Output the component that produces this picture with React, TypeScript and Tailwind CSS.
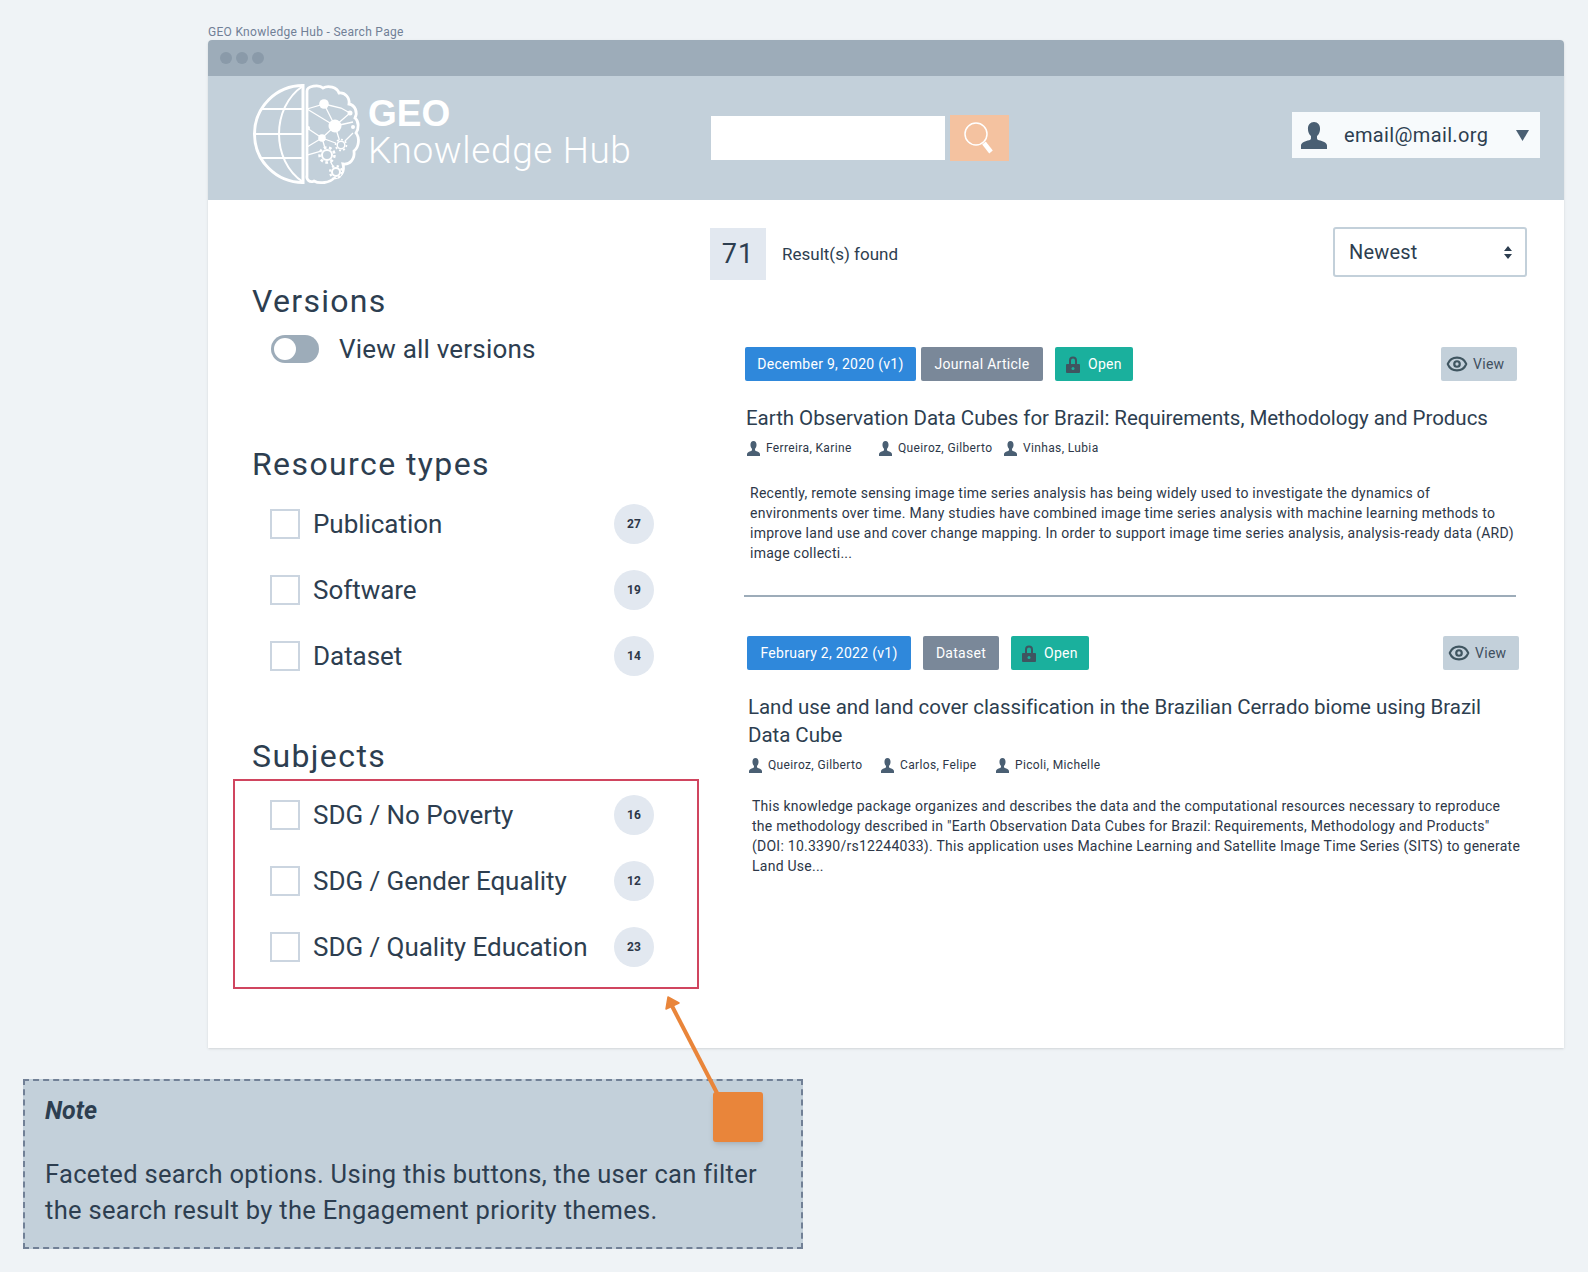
import { Eye } from "lucide-react";

const resourceTypes = [
  { name: "Publication", count: 27 },
  { name: "Software", count: 19 },
  { name: "Dataset", count: 14 },
];

const subjects = [
  { name: "SDG / No Poverty", count: 16 },
  { name: "SDG / Gender Equality", count: 12 },
  { name: "SDG / Quality Education", count: 23 },
];

function UserIcon({ className }: { className: string }) {
  return (
    <svg className={className} viewBox="0 0 24 26" fill="currentColor" preserveAspectRatio="none">
      <path d="M12 0c3.600 0 5.600 2.800 5.600 6.600 0 3-1.100 5.600-2.800 7v2.200c0 .9 1 1.500 3 2.100 3.600 1.100 6.200 2.500 6.200 5V26H0v-3.100c0-2.500 2.600-3.900 6.200-5 2-.6 3-1.200 3-2.100v-2.200c-1.700-1.400-2.800-4-2.800-7C6.400 2.800 8.400 0 12 0z" />
    </svg>
  );
}

function LockIcon() {
  return (
    <svg className="w-[14px] h-[17px] text-[#3f5560]" viewBox="0 0 14 17" fill="currentColor">
      <path d="M3 8V4.500a4 4 0 0 1 8 0V8H9V4.500a2 2 0 0 0-4 0V8z" />
      <rect x="0" y="8" width="14" height="9" rx="1" />
      <circle cx="7" cy="12.500" r="1.500" fill="#1ab09d" />
    </svg>
  );
}

function Logo() {
  return (
    <svg className="w-[130px] h-[120px] shrink-0" viewBox="0 1 130 120" fill="none" stroke="#fff" strokeWidth="2">
      <path d="M58 10.500A48.500 48.500 0 0 0 58 107.500" strokeWidth="3" />
      <path d="M58 9V109" strokeWidth="3" />
      <path d="M58 11C26 32 26 86 58 107" />
      <path d="M17 34H58M9 59H58M17 83H58" />
      <path
        d="M62 16C62 11 74 9 78 13C83 10 92 12 94 18C100 17 105 23 104 29C110 30 113 37 110 43C114 46 114 54 111 58C115 63 114 72 109 76C110 84 105 90 98 89C100 96 96 103 89 103C85 108 74 109 69 106C65 108 61 105 62 100Z"
        strokeWidth="2.800"
      />
      <path d="M62 34L79 29L90 51L105 38M79 29L96 33L105 38M90 51L77 63L62 53M90 51L108 47M90 51L96 70L108 58M77 63L62 72M77 63L82 80L91 97M62 80L76 76M62 34L90 51M77 63L96 70" strokeWidth="1.300" />
      <g fill="#fff" stroke="none">
        <circle cx="79" cy="29" r="4.800" />
        <circle cx="90" cy="51" r="6.500" />
        <circle cx="77" cy="63" r="3.800" />
        <circle cx="105" cy="38" r="2.500" />
        <circle cx="108" cy="52" r="2" />
        <circle cx="63" cy="53" r="2" />
      </g>
      <g fill="#c3d0da">
        <circle cx="82" cy="80" r="7.500" strokeWidth="2.500" strokeDasharray="2.800 2.500" />
        <circle cx="82" cy="80" r="5" strokeWidth="2" />
        <circle cx="96" cy="70" r="5.500" strokeWidth="1.600" strokeDasharray="2 2.200" />
        <circle cx="96" cy="70" r="3.800" strokeWidth="1.500" />
        <circle cx="91" cy="97" r="6" strokeWidth="2.200" strokeDasharray="2.300 2.400" />
        <circle cx="91" cy="97" r="4" strokeWidth="2" />
      </g>
    </svg>
  );
}

function FacetRow({ name, count }: { name: string; count: number }) {
  return (
    <div className="flex items-center h-[66px] w-[384px]">
      <div className="w-[30px] h-[30px] border-2 border-[#cbd5e0] bg-white" />
      <span className="ml-[13px] text-[26px] leading-8 tracking-[-0.04px] text-[#2d3e50]">{name}</span>
      <span className="ml-auto w-10 h-10 rounded-full bg-[#e2e8f0] flex items-center justify-center text-[12px] font-bold text-[#2d3748]">
        {count}
      </span>
    </div>
  );
}

function Author({ name, className }: { name: string; className: string }) {
  return (
    <div className={`flex items-center ${className}`}>
      <UserIcon className="w-[13px] h-[15px] text-[#4a5f73]" />
      <span className="ml-[6px] text-[12px] leading-4 tracking-[0.36px] text-[#2d3748]">{name}</span>
    </div>
  );
}

function ResultMeta({
  date,
  dateWidth,
  kind,
  kindWidth,
  greenGap,
}: {
  date: string;
  dateWidth: string;
  kind: string;
  kindWidth: string;
  greenGap: string;
}) {
  return (
    <div className="flex items-center h-[34px] text-[14px] tracking-[0.28px] text-white">
      <span className={`${dateWidth} h-full rounded-[2px] bg-[#2f88db] flex items-center justify-center`}>{date}</span>
      <span className={`${kindWidth} ml-[5px] h-full rounded-[2px] bg-[#7a8899] flex items-center justify-center`}>{kind}</span>
      <span className={`${greenGap} w-[78px] h-full rounded-[2px] bg-[#1ab09d] flex items-center pl-[11px] gap-[8px]`}>
        <LockIcon />
        Open
      </span>
      <span className="ml-auto w-[76px] h-full rounded-[2px] bg-[#c3d0da] flex items-center pl-[5px] gap-[5px] text-[#3f4f5f]">
        <Eye className="w-[22px] h-[22px] text-[#3f5560]" strokeWidth={2.400} />
        View
      </span>
    </div>
  );
}

export default function App() {
  return (
    <div
      className="relative h-[1272px] w-[1588px] overflow-hidden bg-[#eff3f6] pt-6 text-[#2d3748]"
      style={{ fontFamily: "Roboto, 'Liberation Sans', sans-serif" }}
    >
      <div className="ml-[208px] w-[1356px]">
        <div className="h-4 pt-[1px] text-[12px] leading-[14px] text-[#718096] tracking-[0.3px]">GEO Knowledge Hub - Search Page</div>

        {/* Browser window */}
        <div className="shadow-sm rounded-t-[4px] overflow-hidden bg-white h-[1008px]">
          <div className="h-9 bg-[#9dacb9] flex items-center pl-3 gap-1">
            <span className="w-3 h-3 rounded-full bg-[#8a9aa9]" />
            <span className="w-3 h-3 rounded-full bg-[#8a9aa9]" />
            <span className="w-3 h-3 rounded-full bg-[#8a9aa9]" />
          </div>

          <div className="h-[124px] bg-[#c3d0da] flex items-start pl-[37px]">
            <Logo />
            <div className="ml-[-7px] w-[343px] pt-[19px] text-white">
              <div className="text-[37px] leading-[38px] font-bold" style={{ fontFamily: "'Liberation Sans', sans-serif" }}>GEO</div>
              <div className="text-[37px] leading-[36px] font-light tracking-[0.6px] whitespace-nowrap">Knowledge Hub</div>
            </div>
            <div className="mt-[40px] w-[234px] h-[44px] bg-white" />
            <div className="ml-[5px] mt-[39px] w-[59px] h-[46px] bg-[#f4c2a0] flex items-center justify-center">
              <svg className="w-[34px] h-[34px]" viewBox="0 0 34 34" fill="none" stroke="#fff">
                <circle cx="13" cy="13" r="11" strokeWidth="1.500" />
                <path d="M21 22L28 31" strokeWidth="4.500" />
              </svg>
            </div>
            <div className="ml-[283px] mt-[36px] w-[248px] h-[46px] bg-[#f7fafc] flex items-center pl-[9px] pr-[11px]">
              <UserIcon className="w-[26px] h-[27px] text-[#4a5f73]" />
              <span className="ml-[17px] text-[20px] tracking-[0.35px] text-[#2d3e50]">email@mail.org</span>
              <svg className="ml-auto w-[13px] h-[11px]" viewBox="0 0 13 11" fill="#4a5f73">
                <path d="M0 0H13L6.500 11Z" />
              </svg>
            </div>
          </div>

          <div className="flex">
            {/* Filters */}
            <aside className="w-[502px] shrink-0 pl-[44px]">
              <h2 className="mt-[81px] text-[32px] leading-10 tracking-[1.3px] text-[#2d3e50]">Versions</h2>
              <div className="mt-[14px] ml-[19px] flex items-center h-7">
                <div className="w-12 h-7 rounded-full bg-[#9dacb9] p-[3px]">
                  <div className="w-[22px] h-[22px] rounded-full bg-white" />
                </div>
                <span className="ml-[20px] text-[26px] tracking-[0.2px] text-[#2d3e50]">View all versions</span>
              </div>

              <h2 className="mt-[81px] text-[32px] leading-10 tracking-[1.4px] text-[#2d3e50]">Resource types</h2>
              <div className="mt-[7px] ml-[18px]">
                {resourceTypes.map((item) => (
                  <FacetRow key={item.name} name={item.name} count={item.count} />
                ))}
              </div>

              <h2 className="mt-[47px] text-[32px] leading-10 tracking-[1.4px] text-[#2d3e50]">Subjects</h2>
              <div className="mt-[3px] -ml-[19px] w-[466px] h-[210px] border-2 border-[#d0455f] pl-[35px] pt-[1px]">
                {subjects.map((item) => (
                  <FacetRow key={item.name} name={item.name} count={item.count} />
                ))}
              </div>
            </aside>

            {/* Results */}
            <main className="flex-1 min-w-0">
              <div className="mt-[28px] h-[52px] flex items-start pr-[37px]">
                <div className="w-14 h-[52px] bg-[#e2e8f0] flex items-center justify-center text-[27px] tracking-[1px] text-[#2d3e50]">71</div>
                <div className="ml-4 h-[54px] flex items-center text-[17px] text-[#2d3e50]">Result(s) found</div>
                <div className="ml-auto -mt-[1px] w-[194px] h-[50px] rounded-[3px] border-2 border-[#c3d0da] flex items-center pl-[14px] pr-[13px] text-[20px] tracking-[0.2px] text-[#2d3e50]">
                  Newest
                  <svg className="ml-auto w-[8px] h-[13px]" viewBox="0 0 8 13" fill="#2d3e50">
                    <path d="M4 0L8 5H0ZM4 13L0 8H8Z" />
                  </svg>
                </div>
              </div>

              <article className="mt-[67px] ml-[35px] w-[772px]">
                <ResultMeta date="December 9, 2020 (v1)" dateWidth="w-[171px]" kind="Journal Article" kindWidth="w-[122px]" greenGap="ml-[12px]" />
                <h3 className="mt-[23px] ml-[1px] text-[20.500px] leading-7 tracking-[-0.04px] text-[#2d3e50] whitespace-nowrap">
                  Earth Observation Data Cubes for Brazil: Requirements, Methodology and Producs
                </h3>
                <div className="mt-[8px] ml-[2px] flex">
                  <Author name="Ferreira, Karine" className="w-[132px]" />
                  <Author name="Queiroz, Gilberto" className="w-[125px]" />
                  <Author name="Vinhas, Lubia" className="w-[120px]" />
                </div>
                <p className="mt-[27px] ml-[5px] w-[768px] whitespace-nowrap text-[14px] leading-5 tracking-[0.25px] text-[#2d3748]">
                  Recently, remote sensing image time series analysis has being widely used to investigate the dynamics of
                  <br />
                  environments over time. Many studies have combined image time series analysis with machine learning methods to
                  <br />
                  improve land use and cover change mapping. In order to support image time series analysis, analysis-ready data (ARD)
                  <br />
                  image collecti...
                </p>
              </article>

              <div className="mt-[32px] ml-[34px] w-[772px] h-[2px] bg-[#9dacb9]" />

              <article className="mt-[39px] ml-[37px] w-[772px]">
                <ResultMeta date="February 2, 2022 (v1)" dateWidth="w-[164px]" kind="Dataset" kindWidth="w-[76px] ml-[12px]" greenGap="ml-[12px]" />
                <h3 className="mt-[23px] ml-[1px] text-[20.500px] leading-7 tracking-[-0.04px] text-[#2d3e50]">
                  Land use and land cover classification in the Brazilian Cerrado biome using Brazil
                  <br />
                  Data Cube
                </h3>
                <div className="mt-[8px] ml-[2px] flex">
                  <Author name="Queiroz, Gilberto" className="w-[132px]" />
                  <Author name="Carlos, Felipe" className="w-[115px]" />
                  <Author name="Picoli, Michelle" className="w-[120px]" />
                </div>
                <p className="mt-[23px] ml-[5px] w-[768px] whitespace-nowrap text-[14px] leading-5 tracking-[0.25px] text-[#2d3748]">
                  This knowledge package organizes and describes the data and the computational resources necessary to reproduce
                  <br />
                  the methodology described in "Earth Observation Data Cubes for Brazil: Requirements, Methodology and Products"
                  <br />
                  (DOI: 10.3390/rs12244033). This application uses Machine Learning and Satellite Image Time Series (SITS) to generate
                  <br />
                  Land Use...
                </p>
              </article>
            </main>
          </div>
        </div>
      </div>

      {/* Note */}
      <div className="mt-[31px] ml-[23px] w-[780px] h-[170px] border-2 border-dashed border-[#718096] bg-[#c3d0da] pl-[20px] pt-[14px] text-[#2d3e50]">
        <div className="text-[25px] leading-8 font-bold italic">Note</div>
        <p className="mt-[29px] text-[25.500px] leading-9 tracking-[0.32px]">
          Faceted search options. Using this buttons, the user can filter
          <br />
          the search result by the Engagement priority themes.
        </p>
      </div>

      {/* Annotation arrow and marker */}
      <svg className="absolute left-[650px] top-[985px] w-[90px] h-[120px]" viewBox="650 985 90 120" fill="#e9853a">
        <path d="M717 1093L672 1006" stroke="#e9853a" strokeWidth="4" fill="none" />
        <path d="M668 997L679 1003L666 1009Z" stroke="#e9853a" strokeWidth="1.500" strokeLinejoin="round" />
      </svg>
      <div className="absolute left-[713px] top-[1092px] w-[50px] h-[50px] rounded-[3px] bg-[#e9853a] shadow-md" />
    </div>
  );
}
